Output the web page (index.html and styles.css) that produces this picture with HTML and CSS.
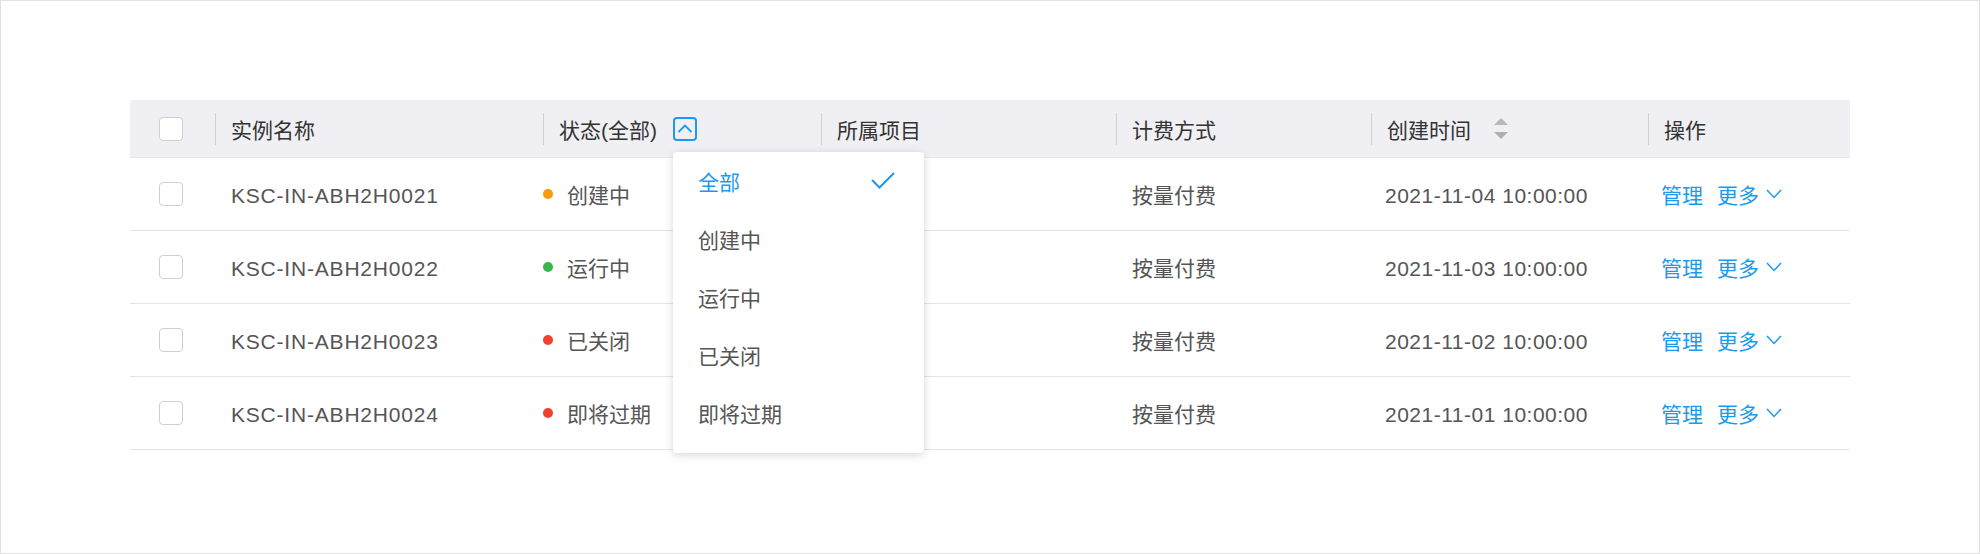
FILE: index.html
```html
<!DOCTYPE html>
<html lang="zh">
<head>
<meta charset="utf-8">
<title>实例列表</title>
<link rel="stylesheet" href="styles.css">
</head>
<body>
<div class="page">
  <div class="table">
    <div class="row head">
      <div class="cell c-check"><span class="checkbox"></span></div>
      <div class="cell"><span class="sep"></span>实例名称</div>
      <div class="cell"><span class="sep"></span>状态(全部)
        <span class="filter">
          <svg class="filter-icon" width="24" height="24" viewBox="0 0 24 24"><rect x="1" y="1" width="22" height="22" rx="3" fill="none" stroke="#1b9aee" stroke-width="2"/><polyline points="5.5,15 12,8.5 18.5,15" fill="none" stroke="#1b9aee" stroke-width="1.8"/></svg>
          <div class="dropdown">
            <div class="opt active">全部<svg width="24" height="17" viewBox="0 0 24 17"><polyline points="1,8 8.5,15.5 23,1" fill="none" stroke="#1b9aee" stroke-width="2"/></svg></div>
            <div class="opt">创建中</div>
            <div class="opt">运行中</div>
            <div class="opt">已关闭</div>
            <div class="opt">即将过期</div>
          </div>
        </span>
      </div>
      <div class="cell"><span class="sep"></span>所属项目</div>
      <div class="cell"><span class="sep"></span>计费方式</div>
      <div class="cell"><span class="sep"></span>创建时间
        <svg class="sort" width="14" height="21" viewBox="0 0 14 21"><polygon points="0,7 7,0 14,7" fill="#b8b8b8"/><polygon points="0,14 14,14 7,21" fill="#b0b0b0"/></svg>
      </div>
      <div class="cell"><span class="sep"></span>操作</div>
    </div>

    <div class="row">
      <div class="cell c-check"><span class="checkbox"></span></div>
      <div class="cell latin">KSC-IN-ABH2H0021</div>
      <div class="cell c-status"><span class="dot orange"></span>创建中</div>
      <div class="cell"></div>
      <div class="cell">按量付费</div>
      <div class="cell latin date">2021-11-04 10:00:00</div>
      <div class="cell c-ops"><a class="link">管理</a><a class="link more">更多<svg width="16" height="10" viewBox="0 0 16 10"><polyline points="1,1 8,8.5 15,1" fill="none" stroke="#1b9aee" stroke-width="1.5"/></svg></a></div>
    </div>
    <div class="row">
      <div class="cell c-check"><span class="checkbox"></span></div>
      <div class="cell latin">KSC-IN-ABH2H0022</div>
      <div class="cell c-status"><span class="dot green"></span>运行中</div>
      <div class="cell"></div>
      <div class="cell">按量付费</div>
      <div class="cell latin date">2021-11-03 10:00:00</div>
      <div class="cell c-ops"><a class="link">管理</a><a class="link more">更多<svg width="16" height="10" viewBox="0 0 16 10"><polyline points="1,1 8,8.5 15,1" fill="none" stroke="#1b9aee" stroke-width="1.5"/></svg></a></div>
    </div>
    <div class="row">
      <div class="cell c-check"><span class="checkbox"></span></div>
      <div class="cell latin">KSC-IN-ABH2H0023</div>
      <div class="cell c-status"><span class="dot red"></span>已关闭</div>
      <div class="cell"></div>
      <div class="cell">按量付费</div>
      <div class="cell latin date">2021-11-02 10:00:00</div>
      <div class="cell c-ops"><a class="link">管理</a><a class="link more">更多<svg width="16" height="10" viewBox="0 0 16 10"><polyline points="1,1 8,8.5 15,1" fill="none" stroke="#1b9aee" stroke-width="1.5"/></svg></a></div>
    </div>
    <div class="row">
      <div class="cell c-check"><span class="checkbox"></span></div>
      <div class="cell latin">KSC-IN-ABH2H0024</div>
      <div class="cell c-status"><span class="dot red"></span>即将过期</div>
      <div class="cell"></div>
      <div class="cell">按量付费</div>
      <div class="cell latin date">2021-11-01 10:00:00</div>
      <div class="cell c-ops"><a class="link">管理</a><a class="link more">更多<svg width="16" height="10" viewBox="0 0 16 10"><polyline points="1,1 8,8.5 15,1" fill="none" stroke="#1b9aee" stroke-width="1.5"/></svg></a></div>
    </div>
  </div>
</div>
</body>
</html>
```

FILE: styles.css
```css
* { box-sizing: border-box; }
html, body { margin: 0; padding: 0; background: #fff; }
body {
  font-family: "Liberation Sans", "Noto Sans CJK SC", sans-serif;
  font-size: 21px;
  color: #555;
}
.page {
  width: 1980px;
  height: 554px;
  border: 1px solid #e2e2e2;
  padding: 99px 129px 0 129px;
}
.table {
  width: 1720px;
}
.row {
  display: grid;
  grid-template-columns: 85px 328px 278px 295px 255px 277px 202px;
  height: 73px;
  border-bottom: 1px solid #e3e3e3;
}
.row.head {
  height: 58px;
  background: #f0f0f4;
  color: #333;
  border-bottom: 1px solid #e8e8ec;
}
.cell {
  display: flex;
  align-items: center;
  padding-left: 16px;
  white-space: nowrap;
}
.latin {
  letter-spacing: 0.8px;
  padding-top: 3px;
}
.date {
  letter-spacing: 0.5px;
  padding-left: 14px;
}
.head .cell { padding-left: 0; }
.sep {
  width: 1px;
  height: 32px;
  background: #d2d2d6;
  margin-right: 15px;
}
.c-check, .head .c-check { padding-left: 29px; }
.checkbox {
  width: 24px;
  height: 24px;
  border: 1.5px solid #cfcfcf;
  border-radius: 4px;
  background: #fff;
}
.filter {
  position: relative;
  display: flex;
  margin-left: 16px;
}
.dropdown {
  position: absolute;
  top: 35px;
  left: 0;
  width: 251px;
  padding: 0 0 11px;
  background: #fff;
  border-radius: 4px;
  box-shadow: 0 2px 9px rgba(0, 0, 0, 0.16);
  z-index: 5;
}
.opt {
  height: 58px;
  display: flex;
  align-items: center;
  justify-content: space-between;
  padding: 0 29px 0 25px;
  color: #555;
}
.opt.active { color: #1b9aee; }
.sort { margin-left: 23px; }
.c-status { padding-left: 0; }
.dot {
  width: 10px;
  height: 10px;
  border-radius: 50%;
  margin-right: 14px;
}
.orange { background: #fb9a0e; }
.green { background: #39b549; }
.red { background: #f4412f; }
.c-ops { padding-left: 13px; }
.link { color: #1b9aee; }
.more {
  display: flex;
  align-items: center;
  margin-left: 14px;
}
.more svg { margin-left: 7px; }
```
